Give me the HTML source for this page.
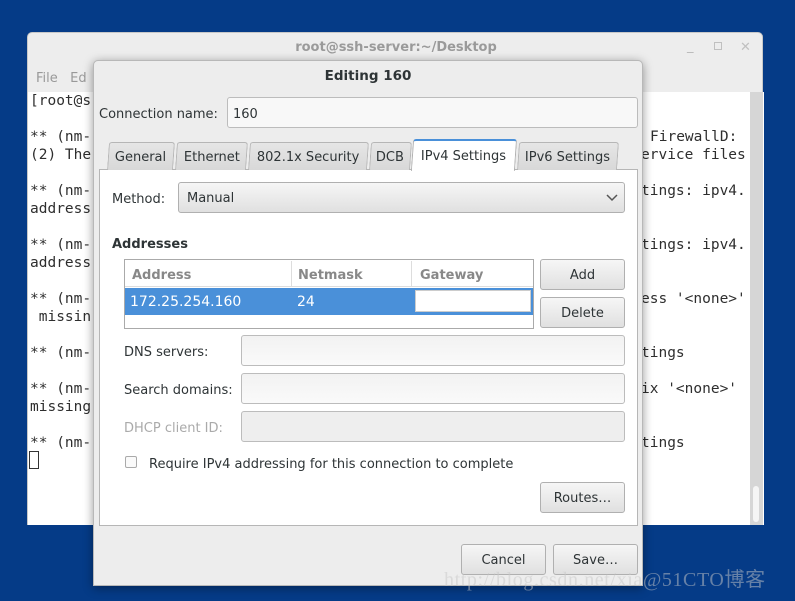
<!DOCTYPE html>
<html><head><style>
*{margin:0;padding:0;box-sizing:border-box}
body{width:795px;height:601px;background:#053b87;position:relative;overflow:hidden;font-family:"DejaVu Sans",sans-serif;font-size:13px;color:#2e3436;line-height:19px}
.a{position:absolute}
.term{left:27px;top:32px;width:736px;height:493px;background:#ededed;border-radius:5px 5px 0 0;border:1px solid #c8c8c8}
.tt{left:0;top:5px;width:736px;text-align:center;font-weight:bold;color:#9a9a9a;font-size:13px}
.tbody{left:0;top:59px;width:736px;height:433px;background:#fff}
.mono{font-family:"DejaVu Sans Mono","Liberation Mono",monospace;font-size:14.5px;color:#2e2e2e;white-space:pre;line-height:18px}
.dlg{left:93px;top:60px;width:550px;height:526px;background:#ededed;border-radius:5px 5px 0 0;border:1px solid #b8b8b8;box-shadow:0 2px 10px rgba(0,0,0,.4)}
.entry{background:linear-gradient(#f2f2f2,#fafafa);border:1px solid #bcbcbc;border-radius:3px}
.btn{background:linear-gradient(#f6f6f6,#e0e0e0);border:1px solid #b0b0b0;border-radius:3px;text-align:center}
.tab{top:142px;height:28px;background:linear-gradient(#e6e6e6,#d8d8d8);border:1px solid #b6b6b6;border-bottom:none;border-radius:3px 3px 0 0;text-align:center;line-height:29px;transform:skewX(-4deg)}
.tab span{display:inline-block;transform:skewX(4deg)}
</style></head><body>
<div class="a term">
 <div class="a tt">root@ssh-server:~/Desktop</div>
 <div class="a" style="left:659px;top:4px;color:#b8b8b8">_</div>
 <div class="a" style="left:686px;top:9px;width:8px;height:8px;border:1px solid #c0c0c0"></div>
 <div class="a" style="left:712px;top:5px;color:#c0c0c0">✕</div>
 <div class="a" style="left:8px;top:36px;color:#999">File&nbsp;&nbsp;&nbsp;Ed</div>
 <div class="a tbody"></div>
 <div class="a" style="left:722px;top:59px;width:13px;height:433px;background:#d6d6d6"></div>
 <div class="a" style="left:725px;top:453px;width:6px;height:36px;background:#f5f5f5;border-radius:3px"></div>
</div>
<div class="a mono" style="left:30px;top:92px">[root@s

** (nm-
(2) The

** (nm-
address

** (nm-
address

** (nm-
 missin

** (nm-

** (nm-
missing

** (nm-</div>
<div class="a" style="left:29px;top:451px;width:10px;height:18px;border:1px solid #333"></div>
<div class="a mono" style="left:650px;top:128px">FirewallD:</div>
<div class="a mono" style="left:641px;top:146px">ervice files</div>
<div class="a mono" style="left:641px;top:182px">tings: ipv4.</div>
<div class="a mono" style="left:641px;top:236px">tings: ipv4.</div>
<div class="a mono" style="left:641px;top:290px">ess '&lt;none&gt;'</div>
<div class="a mono" style="left:641px;top:344px">tings</div>
<div class="a mono" style="left:641px;top:380px">ix '&lt;none&gt;'</div>
<div class="a mono" style="left:641px;top:434px">tings</div>

<div class="a dlg"></div>
<div class="a" style="left:93px;top:67px;width:550px;text-align:center;font-weight:bold;font-size:13.5px">Editing 160</div>
<div class="a" style="left:99px;top:105px">Connection name:</div>
<div class="a entry" style="left:227px;top:97px;width:411px;height:31px;background:#f8f8f8"></div>
<div class="a" style="left:233px;top:105px">160</div>

<div class="a" style="left:99px;top:169px;width:539px;height:357px;background:#fff;border:1px solid #b6b6b6"></div>
<div class="a tab" style="left:108px;width:66px"><span>General</span></div>
<div class="a tab" style="left:176px;width:71px"><span>Ethernet</span></div>
<div class="a tab" style="left:249px;width:119px"><span>802.1x Security</span></div>
<div class="a tab" style="left:370px;width:41px"><span>DCB</span></div>
<div class="a tab" style="left:518px;width:100px"><span>IPv6 Settings</span></div>
<div class="a tab" style="left:412px;top:139px;height:32px;width:104px;background:#fff;border-color:#b0b0b0;border-top:2px solid #4a90d9;line-height:31px"><span>IPv4 Settings</span></div>

<div class="a" style="left:112px;top:190px">Method:</div>
<div class="a btn" style="left:178px;top:182px;width:447px;height:31px;text-align:left;padding:6px 0 0 8px">Manual</div>
<svg class="a" style="left:606px;top:194px" width="12" height="8"><path d="M1 1 L6 6 L11 1" stroke="#555" stroke-width="1.5" fill="none"/></svg>

<div class="a" style="left:112px;top:235px;font-weight:bold">Addresses</div>
<div class="a" style="left:124px;top:259px;width:410px;height:70px;border:1px solid #aaa;background:#fff"></div>
<div class="a" style="left:125px;top:260px;width:408px;height:27px;border-bottom:1px solid #ddd"></div>
<div class="a" style="left:291px;top:261px;width:1px;height:25px;background:#ddd"></div>
<div class="a" style="left:411px;top:261px;width:1px;height:25px;background:#ddd"></div>
<div class="a" style="left:132px;top:266px;color:#888;font-weight:bold">Address</div>
<div class="a" style="left:298px;top:266px;color:#888;font-weight:bold">Netmask</div>
<div class="a" style="left:420px;top:266px;color:#888;font-weight:bold">Gateway</div>
<div class="a" style="left:125px;top:288px;width:408px;height:27px;background:#4a90d9"></div>
<div class="a" style="left:130px;top:293px;color:#fff;font-size:14px">172.25.254.160</div>
<div class="a" style="left:297px;top:293px;color:#fff;font-size:14px">24</div>
<div class="a" style="left:415px;top:290px;width:116px;height:22px;background:#fff;border:1px solid #ccc"></div>
<div class="a btn" style="left:540px;top:259px;width:85px;height:31px;line-height:32px">Add</div>
<div class="a btn" style="left:540px;top:297px;width:85px;height:31px;line-height:32px">Delete</div>

<div class="a" style="left:124px;top:343px">DNS servers:</div>
<div class="a entry" style="left:241px;top:335px;width:384px;height:31px"></div>
<div class="a" style="left:124px;top:381px">Search domains:</div>
<div class="a entry" style="left:241px;top:373px;width:384px;height:31px"></div>
<div class="a" style="left:124px;top:419px;color:#aaa">DHCP client ID:</div>
<div class="a entry" style="left:241px;top:411px;width:384px;height:31px;background:#eee"></div>
<div class="a" style="left:125px;top:456px;width:12px;height:12px;border:1px solid #aaa;border-radius:2px;background:#fafafa"></div>
<div class="a" style="left:149px;top:455px">Require IPv4 addressing for this connection to complete</div>
<div class="a btn" style="left:540px;top:482px;width:85px;height:31px;line-height:32px">Routes…</div>

<div class="a btn" style="left:461px;top:544px;width:85px;height:31px;line-height:32px">Cancel</div>
<div class="a btn" style="left:553px;top:544px;width:85px;height:31px;line-height:32px">Save…</div>
<div class="a" style="left:444px;top:568px;font-family:'Liberation Serif',serif;font-size:20px;letter-spacing:0.6px;color:rgba(200,200,200,.5);line-height:24px">http://blog.csdn.net/xia@51CTO博客</div>
</body></html>
